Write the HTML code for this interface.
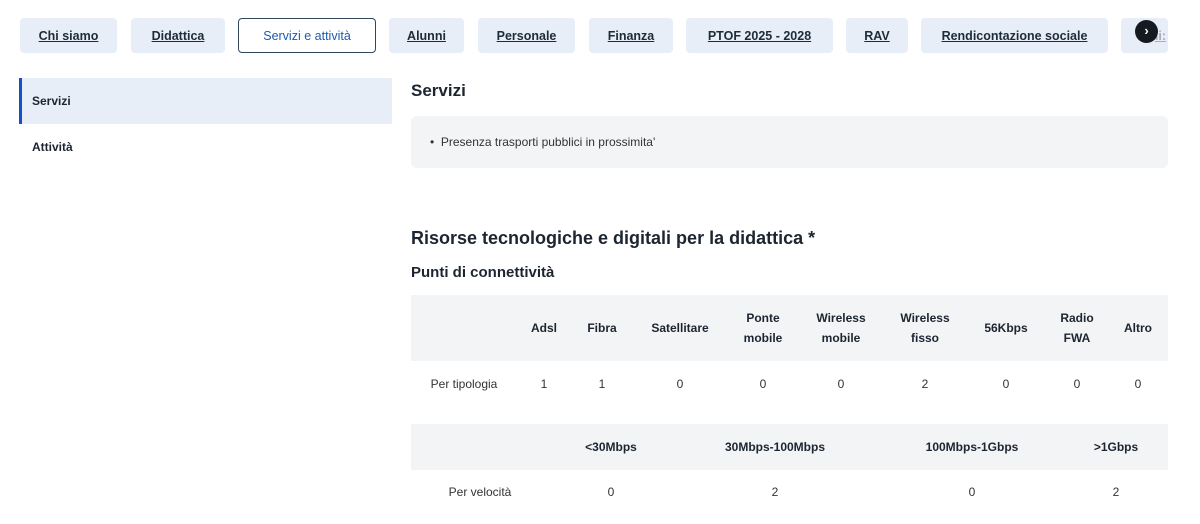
<!DOCTYPE html>
<html><head><meta charset="utf-8"><style>
*{margin:0;padding:0;box-sizing:border-box}
body{width:1200px;height:524px;overflow:hidden;background:#fff;font-family:"Liberation Sans",sans-serif;color:#1c2530;position:relative}
.a{position:absolute}
.tab{position:absolute;top:18px;height:35px;background:#e7eef8;border-radius:4px;font-size:12.5px;font-weight:bold;color:#1e2b38;text-decoration:underline;display:flex;align-items:center;justify-content:center}
.c{position:absolute;transform:translateX(-50%);text-align:center;white-space:nowrap}
.h{font-size:12px;font-weight:bold;line-height:20px}
.v{font-size:12px;color:#333}
</style></head><body>
<div class="tab" style="left:20px;width:97px">Chi siamo</div>
<div class="tab" style="left:131px;width:94px">Didattica</div>
<div class="tab" style="left:238px;width:138px;background:#fff;border:1px solid #33475b;color:#1d5bb0;text-decoration:none;font-weight:normal;font-size:12.5px">Servizi e attività</div>
<div class="tab" style="left:389px;width:75px">Alunni</div>
<div class="tab" style="left:478px;width:97px">Personale</div>
<div class="tab" style="left:589px;width:84px">Finanza</div>
<div class="tab" style="left:686px;width:147px">PTOF 2025 - 2028</div>
<div class="tab" style="left:846px;width:62px">RAV</div>
<div class="tab" style="left:921px;width:187px">Rendicontazione sociale</div>
<div class="tab" style="left:1121px;width:47px;justify-content:flex-end;padding-right:2px;color:#aab">li:</div>
<div class="a" style="left:1135px;top:20px;width:23px;height:23px;border-radius:50%;background:#151a20;color:#fff;font-size:13px;font-weight:bold;text-align:center;line-height:22px">›</div>

<div class="a" style="left:19px;top:78px;width:373px;height:46px;background:#e8eef7;border-left:3px solid #1450c8"></div>
<div class="a" style="left:32px;top:94px;font-size:12px;font-weight:bold">Servizi</div>
<div class="a" style="left:32px;top:140px;font-size:12px;font-weight:bold">Attività</div>

<div class="a" style="left:411px;top:81px;font-size:17px;font-weight:bold">Servizi</div>
<div class="a" style="left:411px;top:116px;width:757px;height:52px;background:#f2f4f6;border-radius:6px"></div>
<div class="a" style="left:430px;top:135px;font-size:12px;color:#333">•&nbsp; Presenza trasporti pubblici in prossimita'</div>

<div class="a" style="left:411px;top:228px;font-size:18px;font-weight:bold">Risorse tecnologiche e digitali per la didattica *</div>
<div class="a" style="left:411px;top:264px;font-size:15px;font-weight:bold">Punti di connettività</div>

<div class="a" style="left:411px;top:295px;width:757px;height:66px;background:#f2f4f6"></div>
<div class="c h" style="left:544px;top:318px">Adsl</div>
<div class="c h" style="left:602px;top:318px">Fibra</div>
<div class="c h" style="left:680px;top:318px">Satellitare</div>
<div class="c h" style="left:763px;top:308px">Ponte<br>mobile</div>
<div class="c h" style="left:841px;top:308px">Wireless<br>mobile</div>
<div class="c h" style="left:925px;top:308px">Wireless<br>fisso</div>
<div class="c h" style="left:1006px;top:318px">56Kbps</div>
<div class="c h" style="left:1077px;top:308px">Radio<br>FWA</div>
<div class="c h" style="left:1138px;top:318px">Altro</div>
<div class="c v" style="left:464px;top:377px">Per tipologia</div>
<div class="c v" style="left:544px;top:377px">1</div>
<div class="c v" style="left:602px;top:377px">1</div>
<div class="c v" style="left:680px;top:377px">0</div>
<div class="c v" style="left:763px;top:377px">0</div>
<div class="c v" style="left:841px;top:377px">0</div>
<div class="c v" style="left:925px;top:377px">2</div>
<div class="c v" style="left:1006px;top:377px">0</div>
<div class="c v" style="left:1077px;top:377px">0</div>
<div class="c v" style="left:1138px;top:377px">0</div>

<div class="a" style="left:411px;top:424px;width:757px;height:46px;background:#f2f4f6"></div>
<div class="c h" style="left:611px;top:437px">&lt;30Mbps</div>
<div class="c h" style="left:775px;top:437px">30Mbps-100Mbps</div>
<div class="c h" style="left:972px;top:437px">100Mbps-1Gbps</div>
<div class="c h" style="left:1116px;top:437px">&gt;1Gbps</div>
<div class="c v" style="left:480px;top:485px">Per velocità</div>
<div class="c v" style="left:611px;top:485px">0</div>
<div class="c v" style="left:775px;top:485px">2</div>
<div class="c v" style="left:972px;top:485px">0</div>
<div class="c v" style="left:1116px;top:485px">2</div>
</body></html>
